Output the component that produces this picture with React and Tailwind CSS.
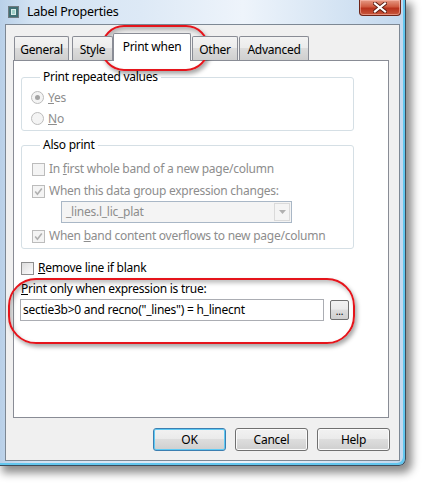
import React from "react";

function Check({ checked, enabled }) {
  return (
    <span
      className={
        "w-[13px] h-[13px] border flex items-center justify-center shrink-0 " +
        (enabled
          ? "border-[#8e8f8f] bg-[linear-gradient(135deg,#dcdcdc,#fdfdfd)]"
          : "border-[#bcbcbc] bg-[#f4f4f4]")
      }
    >
      {checked && (
        <svg width="9" height="9" viewBox="0 0 9 9">
          <path d="M1.2 4.6 L3.4 7.2 L7.8 1.4" stroke="#b0b0b0" strokeWidth="1.6" fill="none" />
        </svg>
      )}
    </span>
  );
}

function Radio({ checked }) {
  return (
    <span className="w-[13px] h-[13px] rounded-full border border-[#bcbcbc] bg-[#f4f4f4] flex items-center justify-center shrink-0">
      {checked && <span className="w-[5px] h-[5px] rounded-full bg-[#a4a4a4]" />}
    </span>
  );
}

function Tab({ children, w }) {
  return (
    <div
      className={
        "h-[24px] border border-[#898c95] border-b-0 rounded-t-[2px] bg-[linear-gradient(#f3f3f3,#ebebeb_50%,#dcdcdc_50%,#cfcfcf)] flex items-center justify-center pt-[2px] text-black " +
        w
      }
    >
      {children}
    </div>
  );
}

function Btn({ children, def }) {
  return (
    <div
      className={
        "w-[73px] h-[23px] rounded-[3px] border flex items-center justify-center text-black bg-[linear-gradient(#f2f2f2,#ebebeb_45%,#dddddd_50%,#cfcfcf)] " +
        (def ? "border-[#3c7fb1] shadow-[inset_0_0_0_1px_#5fcaf4]" : "border-[#707070] shadow-[inset_0_0_0_1px_#fbfbfb]")
      }
    >
      {children}
    </div>
  );
}

export default function App() {
  return (
    <div className="relative w-[423px] h-[483px] bg-white overflow-hidden font-[family-name:Noto_Sans,sans-serif] text-[12px] leading-[16px] tracking-[-0.25px]">
      {/* window */}
      <div className="w-[406px] h-[466px] flex flex-col border-r border-b border-[#3d4b5a] rounded-br-[7px] bg-[linear-gradient(90deg,#b9d0e8,#d3e3f3_8%,#dde9f6_35%,#eef4fb_60%,#d8e6f4_80%,#c3d8ee)] shadow-[inset_-2px_-2px_0_#62c6ee,4px_5px_9px_2px_rgba(0,0,0,0.45)]">
        {/* title bar */}
        <div className="h-[24px] flex items-start">
          <div className="ml-[8px] mt-[6px] w-[11px] h-[12px] border border-[#6f7a80] bg-[#3f6f73] flex items-center justify-center">
            <div className="w-[5px] h-[6px] bg-[#9fd0c8] border border-[#d8ece8]" />
          </div>
          <div className="ml-[8px] mt-[4px] text-[12.5px] text-black">Label Properties</div>
          <div className="ml-auto mr-[4px] w-[42px] h-[16px] rounded-b-[4px] border border-t-0 border-[#6e2417] bg-[linear-gradient(#e69a85,#cf5a40_45%,#b8321c_55%,#c8583d)] flex items-center justify-center shadow-[inset_0_0_0_1px_rgba(255,200,190,0.5)]">
            <svg width="14" height="11" viewBox="0 0 14 11">
              <path d="M2 1.5 L12 9.5 M12 1.5 L2 9.5" stroke="#5a1c12" strokeWidth="4" strokeLinecap="square" />
              <path d="M2 1.5 L12 9.5 M12 1.5 L2 9.5" stroke="#ffffff" strokeWidth="2.2" strokeLinecap="square" />
            </svg>
          </div>
        </div>

        {/* client area */}
        <div className="ml-[5px] w-[395px] h-[437px] border border-[#7d8894] bg-[#f0f0f0] flex flex-col">
          {/* tabs */}
          <div className="mt-[8px] h-[27px] ml-[8px] flex items-end relative z-10">
            <Tab w="w-[55px]">General</Tab>
            <div className="w-[3px]" />
            <Tab w="w-[41px]">Style</Tab>
            <div className="w-[78px] h-[28px] -mb-[1px] border border-[#898c95] border-b-0 rounded-t-[2px] bg-white flex items-center justify-center pb-[2px] text-black">
              Print when
            </div>
            <div className="w-[1px]" />
            <Tab w="w-[46px]">Other</Tab>
            <div className="w-[1px]" />
            <Tab w="w-[70px]">Advanced</Tab>
          </div>

          {/* panel */}
          <div className="ml-[7px] w-[376px] h-[358px] border border-[#898c95] bg-white flex flex-col">
            <fieldset className="mt-[8px] ml-[7px] w-[333px] border border-[#d5dfe5] rounded-[3px] pl-[9px] pb-[1px]">
              <legend className="ml-[9px] px-[3px] h-[16px] text-black">Print repeated values</legend>
              <div className="pt-[2px]">
                <div className="h-[21px] flex items-center gap-[3px] text-[#8d8d8d]">
                  <Radio checked />
                  <span className="ml-[1px]"><span className="underline">Y</span>es</span>
                </div>
                <div className="h-[21px] flex items-center gap-[3px] text-[#8d8d8d]">
                  <Radio />
                  <span className="ml-[1px]"><span className="underline">N</span>o</span>
                </div>
              </div>
            </fieldset>

            <fieldset className="mt-[6px] ml-[7px] w-[333px] border border-[#d5dfe5] rounded-[3px] pl-[10px] pb-[2px]">
              <legend className="ml-[8px] px-[3px] h-[16px] text-black">Also print</legend>
              <div className="pt-[6px] text-[#8d8d8d]">
                <div className="h-[20px] flex items-center gap-[4px]">
                  <Check />
                  <span>In <span className="underline">f</span>irst whole band of a new page/column</span>
                </div>
                <div className="mt-[2px] h-[20px] flex items-center gap-[4px]">
                  <Check checked />
                  <span>When this data <span className="underline">g</span>roup expression changes:</span>
                </div>
                <div className="ml-[29px] w-[231px] h-[22px] border border-[#a9b7c6] bg-[#f4f4f4] flex items-center">
                  <span className="ml-[4px] flex-1">_lines.l_lic_plat</span>
                  <div className="w-[16px] h-[18px] mr-[1px] border border-[#dadada] bg-[#f4f4f4] flex items-center justify-center">
                    <svg width="7" height="4" viewBox="0 0 7 4">
                      <path d="M0 0 L7 0 L3.5 4 Z" fill="#b0b0b0" />
                    </svg>
                  </div>
                </div>
                <div className="mt-[3px] h-[20px] flex items-center gap-[4px]">
                  <Check checked />
                  <span>When <span className="underline">b</span>and content overflows to new page/column</span>
                </div>
              </div>
            </fieldset>

            <div className="mt-[9px] ml-[7px] h-[20px] flex items-center gap-[4px] text-black">
              <Check enabled />
              <span><span className="underline">R</span>emove line if blank</span>
            </div>
            <div className="mt-[3px] ml-[7px] h-[16px] flex items-center text-black">
              <span><span className="underline">P</span>rint only when expression is true:</span>
            </div>
            <div className="mt-[2px] ml-[6px] flex items-start">
              <div className="w-[304px] h-[22px] border border-[#abadb3] bg-white flex items-center pl-[2px] text-black">
                sectie3b&gt;0 and recno("_lines") = h_linecnt
              </div>
              <div className="ml-[6px] mt-[1px] w-[19px] h-[20px] rounded-[2px] border border-[#707070] bg-[linear-gradient(#f2f2f2,#ebebeb_45%,#dddddd_50%,#cfcfcf)] flex items-end justify-center pb-[3px] text-black text-[10px] leading-[10px]">
                ...
              </div>
            </div>
          </div>

          {/* buttons */}
          <div className="mt-[10px] mr-[9px] flex justify-end gap-[9px]">
            <Btn def>OK</Btn>
            <Btn>Cancel</Btn>
            <Btn>Help</Btn>
          </div>
        </div>
      </div>

      {/* annotations */}
      <div className="absolute left-[101px] top-[25px] w-[108px] h-[46px] rounded-[24px] border-[2.5px] border-[#e5141b] shadow-[2px_3px_4px_rgba(0,0,0,0.35),inset_2px_3px_4px_rgba(0,0,0,0.25)]" />
      <div className="absolute left-[8px] top-[278px] w-[347px] h-[66px] rounded-[28px] border-[2.5px] border-[#e5141b] shadow-[2px_3px_4px_rgba(0,0,0,0.35),inset_2px_3px_4px_rgba(0,0,0,0.25)]" />
    </div>
  );
}
